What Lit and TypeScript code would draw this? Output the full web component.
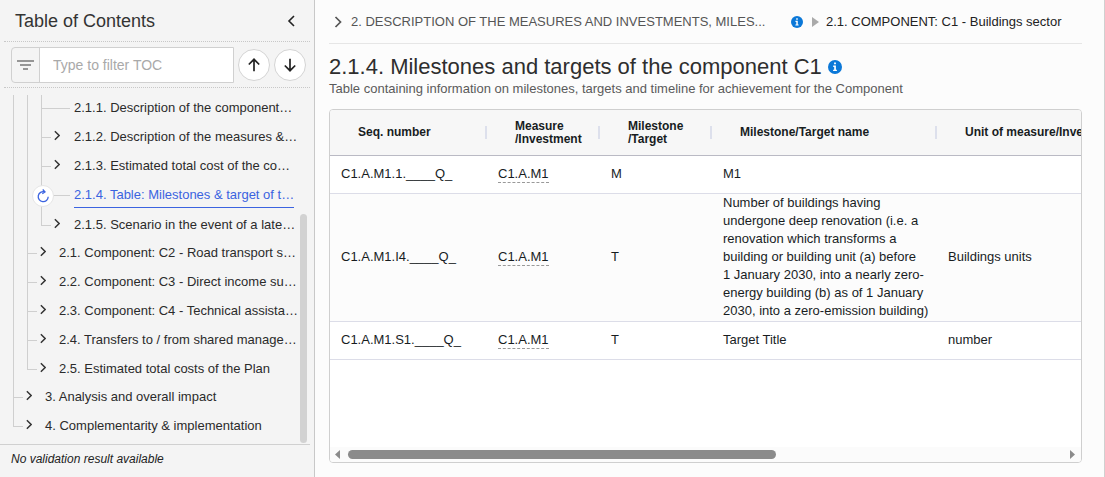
import { LitElement, html, css, svg, nothing } from "lit";
import { customElement, state } from "lit/decorators.js";

interface TocNode {
  label?: string;
  leaf?: boolean;
  active?: boolean;
  children?: TocNode[];
}

const TOC: TocNode[] = [
  {
    children: [
      {
        children: [
          { label: "2.1.1. Description of the component…", leaf: true },
          { label: "2.1.2. Description of the measures &…" },
          { label: "2.1.3. Estimated total cost of the co…" },
          { label: "2.1.4. Table: Milestones & target of t…", leaf: true, active: true },
          { label: "2.1.5. Scenario in the event of a late…" },
        ],
      },
      { label: "2.1. Component: C2 - Road transport s…" },
      { label: "2.2. Component: C3 - Direct income su…" },
      { label: "2.3. Component: C4 - Technical assista…" },
      { label: "2.4. Transfers to / from shared manage…" },
      { label: "2.5. Estimated total costs of the Plan" },
    ],
  },
  { label: "3. Analysis and overall impact" },
  { label: "4. Complementarity & implementation" },
];

interface Row {
  seq: string;
  measure: string;
  kind: string;
  name: string;
  unit: string;
}

const ROWS: Row[] = [
  { seq: "C1.A.M1.1.____Q_", measure: "C1.A.M1", kind: "M", name: "M1", unit: "" },
  {
    seq: "C1.A.M1.I4.____Q_",
    measure: "C1.A.M1",
    kind: "T",
    name: "Number of buildings having undergone deep renovation (i.e. a renovation which transforms a building or building unit (a) before 1\u00a0January 2030, into a nearly zero-energy building (b) as of 1 January 2030, into a zero-emission building)",
    unit: "Buildings units",
  },
  { seq: "C1.A.M1.S1.____Q_", measure: "C1.A.M1", kind: "T", name: "Target Title", unit: "number" },
];

const chevron = (w: number, h: number) => html`<svg width=${w} height=${h} viewBox="0 0 7 12" aria-hidden="true">
  <path d="M1 1l5 5-5 5" fill="none" stroke="currentColor" stroke-width="1.7" />
</svg>`;

const info = (size: number) => html`<svg width=${size} height=${size} viewBox="0 0 14 14" role="img" aria-label="Information">
  <circle cx="7" cy="7" r="7" fill="#0b78d8" />
  ${svg`<path d="M6.1 2.6h1.8v1.7H6.1zM5.2 5.6h2.7v4.2h1v1.3H5.1V9.8h1.1V6.9h-1z" fill="#fff"/>`}
</svg>`;

@customElement("toc-panel")
export class TocPanel extends LitElement {
  static styles = css`
    :host {
      display: flex;
      flex-direction: column;
      box-sizing: border-box;
      width: 315px;
      flex: none;
      background: #f4f4f4;
      border-right: 1px solid #c8c8c8;
    }
    * { box-sizing: border-box; }
    .head {
      display: flex;
      align-items: center;
      justify-content: space-between;
      height: 42px;
      margin: 0 4px;
      padding: 0 15px 0 11px;
      border-bottom: 1px dotted #c8c8c8;
    }
    h2 { margin: 0; font-size: 18px; font-weight: 400; line-height: 24px; color: #333; }
    button { font: inherit; padding: 0; border: 0; background: none; color: #222; display: flex; align-items: center; justify-content: center; }
    .filter {
      display: flex;
      align-items: center;
      gap: 4px;
      height: 46px;
      margin: 0 4px;
      padding: 0 4px 0 7px;
      border-bottom: 1px dotted #c8c8c8;
    }
    .field {
      display: flex;
      flex: 1;
      min-width: 0;
      height: 36px;
      border: 1px solid #d0d0d0;
      border-radius: 4px 0 0 4px;
      overflow: hidden;
    }
    .field label { display: flex; align-items: center; justify-content: center; width: 28px; border-right: 1px solid #d0d0d0; }
    .field input {
      flex: 1;
      min-width: 0;
      border: 0;
      padding: 0 13px;
      font: 400 14px/20px "Liberation Sans", Arial, sans-serif;
      background: #fff;
      color: #333;
      outline: none;
    }
    .field input::placeholder { color: #a9a9a9; }
    .round { width: 32px; height: 32px; border: 1px solid #d4d4d4; border-radius: 50%; background: #fff; flex: none; }
    .body { display: flex; flex: 1; padding: 7px 7px 1px 13px; }
    .tree { flex: 1; min-width: 0; overflow: hidden; }
    ul { list-style: none; margin: 0; padding: 0; }
    .tree > ul { margin-top: -2px; }
    li {
      --v: 100%;
      --h: 10px;
      padding-left: 14px;
      background-image: linear-gradient(#cfcfcf, #cfcfcf), linear-gradient(#cfcfcf, #cfcfcf);
      background-repeat: no-repeat;
      background-size: 1px var(--v), var(--h) 1px;
      background-position: 0 0, 0 15px;
    }
    li:last-child { --v: 16px; }
    li.leaf { --h: 29px; }
    li.group { --h: 0; }
    li > ul { margin-bottom: -1px; }
    .row { display: flex; align-items: center; height: 29px; gap: 13px; margin-left: -1px; position: relative; color: #333; }
    li li li .row { gap: 14px; }
    .twist { width: 6px; height: 11px; margin-top: -2px; color: #333; }
    .label {
      min-width: 0;
      white-space: nowrap;
      text-decoration: none;
      font-size: 13px;
      line-height: 24px;
      color: #2b2b2b;
    }
    .leaf .label { margin-left: 20px; }
    .active .row { height: 30px; }
    .active .label { color: #3b63e0; border-bottom: 1px solid #3b63e0; }
    .reload {
      position: absolute;
      left: -22px;
      top: 5px;
      width: 22px;
      height: 22px;
      border: 1px solid #e6e6e6;
      border-radius: 50%;
      background: #fff;
    }
    .bar { width: 7px; height: 229px; align-self: flex-end; border-radius: 4px; background: #d2d2d2; }
    .foot {
      margin: 0 4px 0 0;
      height: 33px;
      padding: 0 11px;
      border-top: 1px solid #d0d0d0;
      font-size: 12px;
      font-style: italic;
      line-height: 28px;
      color: #222;
    }
  `;

  private node(n: TocNode): unknown {
    const cls = `${n.leaf ? "leaf" : ""} ${n.active ? "active" : ""} ${n.label ? "" : "group"}`;
    return html`<li class=${cls}>
      ${n.label
        ? html`<div class="row">
            ${n.leaf ? nothing : html`<button class="twist" aria-label="Expand">${chevron(7, 11)}</button>`}
            ${n.active
              ? html`<button class="reload" aria-label="Reload">
                  <svg width="14" height="14" viewBox="0 0 14 14" aria-hidden="true">
                    <path d="M8.6 2.9A5 5 0 1 0 12.2 7.8M6.7 0.5L9 2.9 6.3 4.8" fill="none" stroke="#3b63e0" stroke-width="1.3" />
                  </svg>
                </button>`
              : nothing}
            <a class="label" href="#">${n.label}</a>
          </div>`
        : nothing}
      ${n.children ? html`<ul>${n.children.map((c) => this.node(c))}</ul>` : nothing}
    </li>`;
  }

  render() {
    return html`
      <div class="head">
        <h2>Table of Contents</h2>
        <button aria-label="Collapse panel">
          <svg width="8" height="12" viewBox="0 0 8 12" aria-hidden="true"><path d="M7 1L2 6l5 5" fill="none" stroke="currentColor" stroke-width="1.6" /></svg>
        </button>
      </div>
      <div class="filter">
        <div class="field">
          <label for="q" aria-label="Filter">
            <svg width="17" height="10" viewBox="0 0 17 10" aria-hidden="true"><path d="M0 1h17M3 5h11M6 9h5" stroke="#777" stroke-width="1.5" /></svg>
          </label>
          <input id="q" type="text" placeholder="Type to filter TOC" />
        </div>
        <button class="round" aria-label="Previous">
          <svg width="14" height="14" viewBox="0 0 14 14" aria-hidden="true"><path d="M7 13.2V1.5M1.8 6.5L7 1.3l5.2 5.2" fill="none" stroke="currentColor" stroke-width="1.7" /></svg>
        </button>
        <button class="round" aria-label="Next">
          <svg width="14" height="14" viewBox="0 0 14 14" aria-hidden="true"><path d="M7 .8v11.7M1.8 7.5L7 12.7l5.2-5.2" fill="none" stroke="currentColor" stroke-width="1.7" /></svg>
        </button>
      </div>
      <div class="body">
        <nav class="tree" aria-label="Table of contents"><ul>${TOC.map((n) => this.node(n))}</ul></nav>
        <div class="bar"></div>
      </div>
      <div class="foot">No validation result available</div>
    `;
  }
}

@customElement("milestone-table")
export class MilestoneTable extends LitElement {
  static styles = css`
    :host {
      display: flex;
      flex-direction: column;
      flex: 1;
      box-sizing: border-box;
      border: 1px solid #cfcfcf;
      border-radius: 4px;
      background: #fff;
      overflow: hidden;
      min-width: 0;
    }
    * { box-sizing: border-box; }
    .view { flex: 1; overflow: hidden; }
    table { width: 1264px; table-layout: fixed; border-collapse: separate; border-spacing: 0; }
    .c1 { width: 157px; }
    .c2 { width: 113px; }
    .c3 { width: 112px; }
    .c4 { width: 225px; }
    th {
      height: 46px;
      padding: 0;
      background: #f7f7f7;
      border-bottom: 1px solid #babac4;
      font-size: 12px;
      line-height: 13px;
      font-weight: 700;
      text-align: left;
      color: #181d1f;
      white-space: nowrap;
    }
    .th { display: flex; align-items: center; justify-content: space-between; padding-left: 28px; }
    .sep { width: 2px; height: 13px; background: #dde0ec; }
    td {
      height: 38px;
      padding: 0 4px 1px 11px;
      border-bottom: 1px solid #dcdde8;
      font-size: 13px;
      line-height: 18px;
      color: #181d1f;
      vertical-align: middle;
    }
    tbody tr:nth-child(even) { background: #fcfcfc; }
    .ref { display: inline-block; line-height: 16px; border-bottom: 1px dashed #999; color: inherit; text-decoration: none; }
    .scroll { display: flex; align-items: center; height: 15px; padding: 0 6px 0 5px; background: #fbfbfb; }
    .track { flex: 1; margin: 0 8px; }
    .thumb { width: 60%; height: 9px; border-radius: 5px; background: #8b8b8b; }
    svg { display: block; }
  `;

  render() {
    const heads = [
      html`Seq. number`,
      html`Measure<br />/Investment`,
      html`Milestone<br />/Target`,
      html`Milestone/Target name`,
      html`Unit of measure/Investment`,
    ];
    return html`
      <div class="view">
        <table>
          <colgroup>
            <col class="c1" /><col class="c2" /><col class="c3" /><col class="c4" /><col />
          </colgroup>
          <thead>
            <tr>${heads.map((h) => html`<th scope="col"><div class="th"><span>${h}</span><span class="sep"></span></div></th>`)}</tr>
          </thead>
          <tbody>
            ${ROWS.map(
              (r) => html`<tr>
                <td>${r.seq}</td>
                <td><a class="ref" href="#">${r.measure}</a></td>
                <td>${r.kind}</td>
                <td>${r.name}</td>
                <td>${r.unit}</td>
              </tr>`
            )}
          </tbody>
        </table>
      </div>
      <div class="scroll">
        <svg width="5" height="9" viewBox="0 0 5 9" aria-hidden="true"><path d="M5 0v9L0 4.5z" fill="#8b8b8b" /></svg>
        <div class="track"><div class="thumb"></div></div>
        <svg width="5" height="9" viewBox="0 0 5 9" aria-hidden="true"><path d="M0 0v9l5-4.5z" fill="#8b8b8b" /></svg>
      </div>
    `;
  }
}

@customElement("app-root")
export class AppRoot extends LitElement {
  @state() private heading = "2.1.4. Milestones and targets of the component C1";

  static styles = css`
    :host {
      display: flex;
      min-height: 100vh;
      font-family: "Liberation Sans", Arial, sans-serif;
      background: #fcfcfc;
    }
    * { box-sizing: border-box; }
    main {
      flex: 1;
      min-width: 0;
      display: flex;
      flex-direction: column;
      padding: 0 22px 14px 14px;
      border-right: 1px solid #d0d0d0;
    }
    .crumbs {
      display: flex;
      align-items: center;
      height: 44px;
      padding-left: 5px;
      border-bottom: 1px solid #e6e6e6;
      font-size: 13px;
      line-height: 20px;
      color: #555;
      white-space: nowrap;
    }
    .crumbs a { color: inherit; text-decoration: none; }
    .first { width: 435px; margin: 0 5px 0 9px; }
    .crumbs .last { color: #222; margin-left: 7px; }
    .arrow { margin-left: 9px; }
    .title { display: flex; align-items: center; gap: 6px; height: 28px; margin-top: 9px; }
    h1 { margin: 0; font-size: 22px; line-height: 28px; font-weight: 400; color: #2e2e2e; }
    p { margin: 0 0 12px; font-size: 13px; line-height: 16px; color: #5a5a5a; }
  `;

  render() {
    return html`
      <toc-panel></toc-panel>
      <main>
        <nav class="crumbs" aria-label="Breadcrumb">
          ${chevron(8, 12)}
          <a class="first" href="#">2. DESCRIPTION OF THE MEASURES AND INVESTMENTS, MILES...</a>
          ${info(12)}
          <svg class="arrow" width="7" height="10" viewBox="0 0 7 10" aria-hidden="true"><path d="M0 0v10l7-5z" fill="#aaa" /></svg>
          <a class="last" href="#">2.1. COMPONENT: C1 - Buildings sector</a>
        </nav>
        <div class="title"><h1>${this.heading}</h1>${info(14)}</div>
        <p>Table containing information on milestones, targets and timeline for achievement for the Component</p>
        <milestone-table></milestone-table>
      </main>
    `;
  }
}
